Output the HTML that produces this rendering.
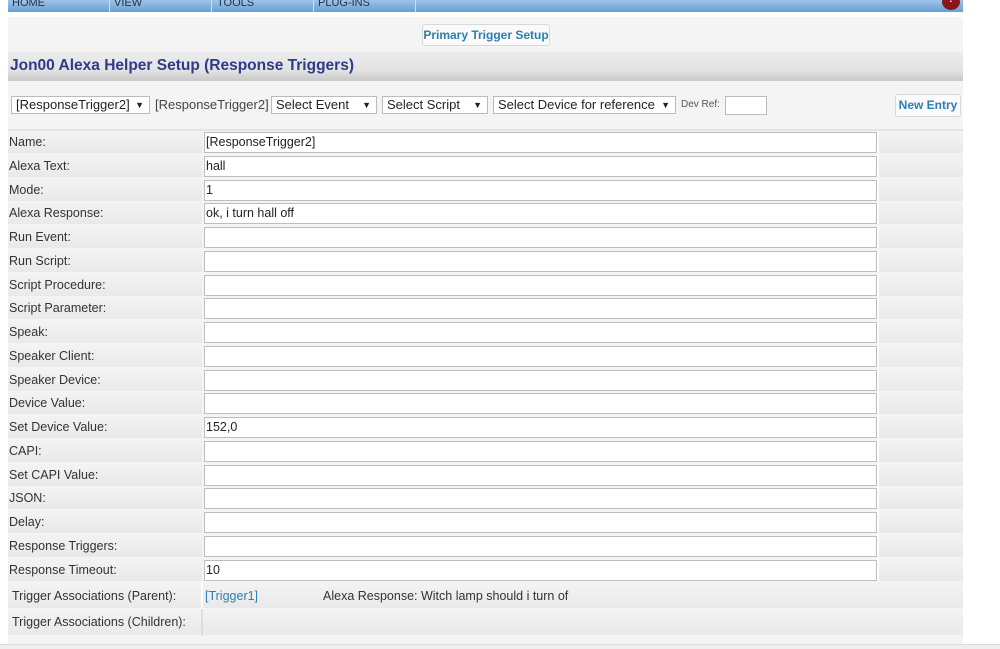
<!DOCTYPE html><html><head><style>
*{margin:0;padding:0;box-sizing:border-box}
body{width:1000px;height:649px;background:#fff;font-family:"Liberation Sans",sans-serif;font-size:12px;color:#222;position:relative;overflow:hidden}
.nav{position:absolute;left:8px;top:0;width:955px;height:12px;background:linear-gradient(#9fc3e8,#6a9fd6);}
.nav span{position:absolute;top:-3px;color:#234;font-size:11px}
.nav i{position:absolute;top:0;width:1px;height:12px;background:#cfe0f2}
.help{position:absolute;left:942px;top:-6px;width:18px;height:16px;border-radius:50%;background:#8b1620;color:#fff;font-size:10px;text-align:center;font-weight:bold}
.main{position:absolute;left:8px;top:17px;width:955px;height:632px;background:#f4f4f4}
.btn{position:absolute;background:#fafafa;border:1px solid #d8d8d8;border-radius:3px;color:#2a7fb0;font-weight:bold;font-size:12px;font-family:"Liberation Sans",sans-serif;text-align:center;white-space:nowrap}
.hdr{position:absolute;left:8px;top:52px;width:955px;height:29px;background:linear-gradient(#ececec 0%,#e2e2e2 65%,#c8c8c8 100%);color:#2d3b8a;font-weight:bold;font-size:15.5px;padding:5px 0 0 2px}
.sel{position:absolute;top:96px;height:18px;background:#fff;border:1px solid #bbb;font-size:13px;padding:0 4px;line-height:16px;color:#222;white-space:nowrap}
.sel b{position:absolute;right:5px;font-size:9px;top:0}
.row{position:absolute;left:8px;width:955px;height:23.75px}
.row .l{position:absolute;left:0;top:0;width:194px;height:22px;background:linear-gradient(#f3f3f3,#e9e9e9);padding:4px 1px;font-size:12.5px;color:#333}
.row .i{position:absolute;left:196px;top:1px;width:673px;height:21px;background:#fff;border:1px solid #bdbdbd;padding:2px 1px;font-size:12.5px}
.row .r{position:absolute;left:869px;top:0;width:86px;height:22px;background:linear-gradient(#f3f3f3,#e9e9e9);border-left:2px solid #fff}
</style></head><body>
<div class="nav"><span style="left:4px">HOME</span><i style="left:101px"></i><span style="left:106px">VIEW</span><i style="left:203px"></i><span style="left:209px">TOOLS</span><i style="left:305px"></i><span style="left:310px">PLUG-INS</span><i style="left:407px"></i></div>
<div class="help">?</div>
<div class="main"></div>
<div class="btn" style="left:422px;top:24px;width:128px;height:22px;line-height:20px">Primary Trigger Setup</div>
<div class="hdr">Jon00 Alexa Helper Setup (Response Triggers)</div>
<div class="sel" style="left:11px;width:139px">[ResponseTrigger2]<b>▼</b></div>
<div style="position:absolute;left:155px;top:97px;font-size:13px;color:#444">[ResponseTrigger2]</div>
<div class="sel" style="left:271px;width:106px">Select Event<b>▼</b></div>
<div class="sel" style="left:382px;width:106px">Select Script<b>▼</b></div>
<div class="sel" style="left:493px;width:183px">Select Device for reference<b>▼</b></div>
<div style="position:absolute;left:681px;top:99px;font-size:10px;color:#555">Dev Ref:</div>
<div style="position:absolute;left:725px;top:96px;width:42px;height:19px;background:#fff;border:1px solid #bbb"></div>
<div class="btn" style="left:895px;top:94px;width:66px;height:23px;line-height:21px">New Entry</div>
<div style="position:absolute;left:8px;top:129px;width:955px;height:2px;background:#e4e4e4"></div>

<div class="row" style="top:131px"><div class="l">Name:</div><div class="i">[ResponseTrigger2]</div><div class="r"></div></div>
<div class="row" style="top:154.75px"><div class="l">Alexa Text:</div><div class="i">hall</div><div class="r"></div></div>
<div class="row" style="top:178.5px"><div class="l">Mode:</div><div class="i">1</div><div class="r"></div></div>
<div class="row" style="top:202.25px"><div class="l">Alexa Response:</div><div class="i">ok, i turn hall off</div><div class="r"></div></div>
<div class="row" style="top:226px"><div class="l">Run Event:</div><div class="i"></div><div class="r"></div></div>
<div class="row" style="top:249.75px"><div class="l">Run Script:</div><div class="i"></div><div class="r"></div></div>
<div class="row" style="top:273.5px"><div class="l">Script Procedure:</div><div class="i"></div><div class="r"></div></div>
<div class="row" style="top:297.25px"><div class="l">Script Parameter:</div><div class="i"></div><div class="r"></div></div>
<div class="row" style="top:321px"><div class="l">Speak:</div><div class="i"></div><div class="r"></div></div>
<div class="row" style="top:344.75px"><div class="l">Speaker Client:</div><div class="i"></div><div class="r"></div></div>
<div class="row" style="top:368.5px"><div class="l">Speaker Device:</div><div class="i"></div><div class="r"></div></div>
<div class="row" style="top:392.25px"><div class="l">Device Value:</div><div class="i"></div><div class="r"></div></div>
<div class="row" style="top:416px"><div class="l">Set Device Value:</div><div class="i">152,0</div><div class="r"></div></div>
<div class="row" style="top:439.75px"><div class="l">CAPI:</div><div class="i"></div><div class="r"></div></div>
<div class="row" style="top:463.5px"><div class="l">Set CAPI Value:</div><div class="i"></div><div class="r"></div></div>
<div class="row" style="top:487.25px"><div class="l">JSON:</div><div class="i"></div><div class="r"></div></div>
<div class="row" style="top:511px"><div class="l">Delay:</div><div class="i"></div><div class="r"></div></div>
<div class="row" style="top:534.75px"><div class="l">Response Triggers:</div><div class="i"></div><div class="r"></div></div>
<div class="row" style="top:558.5px"><div class="l">Response Timeout:</div><div class="i">10</div><div class="r"></div></div>

<div style="position:absolute;left:8px;top:583px;width:955px;height:25px;background:linear-gradient(#f3f3f3,#e9e9e9)"></div>
<div style="position:absolute;left:201px;top:583px;width:2px;height:53px;background:#fff"></div>
<div style="position:absolute;left:12px;top:589px;color:#333;font-size:12.5px">Trigger Associations (Parent):</div>
<div style="position:absolute;left:205px;top:589px;color:#2a7fb0;font-size:12.5px">[Trigger1]</div>
<div style="position:absolute;left:323px;top:589px;color:#333;font-size:12.5px">Alexa Response: Witch lamp should i turn of</div>
<div style="position:absolute;left:8px;top:609px;width:955px;height:26px;background:linear-gradient(#f3f3f3,#e9e9e9)"></div>
<div style="position:absolute;left:201px;top:609px;width:2px;height:27px;background:#ddd"></div>
<div style="position:absolute;left:12px;top:615px;color:#333;font-size:12.5px">Trigger Associations (Children):</div>
<div style="position:absolute;left:0;top:644px;width:1000px;height:5px;background:#eee;border-top:1px solid #ddd"></div>
</body></html>
